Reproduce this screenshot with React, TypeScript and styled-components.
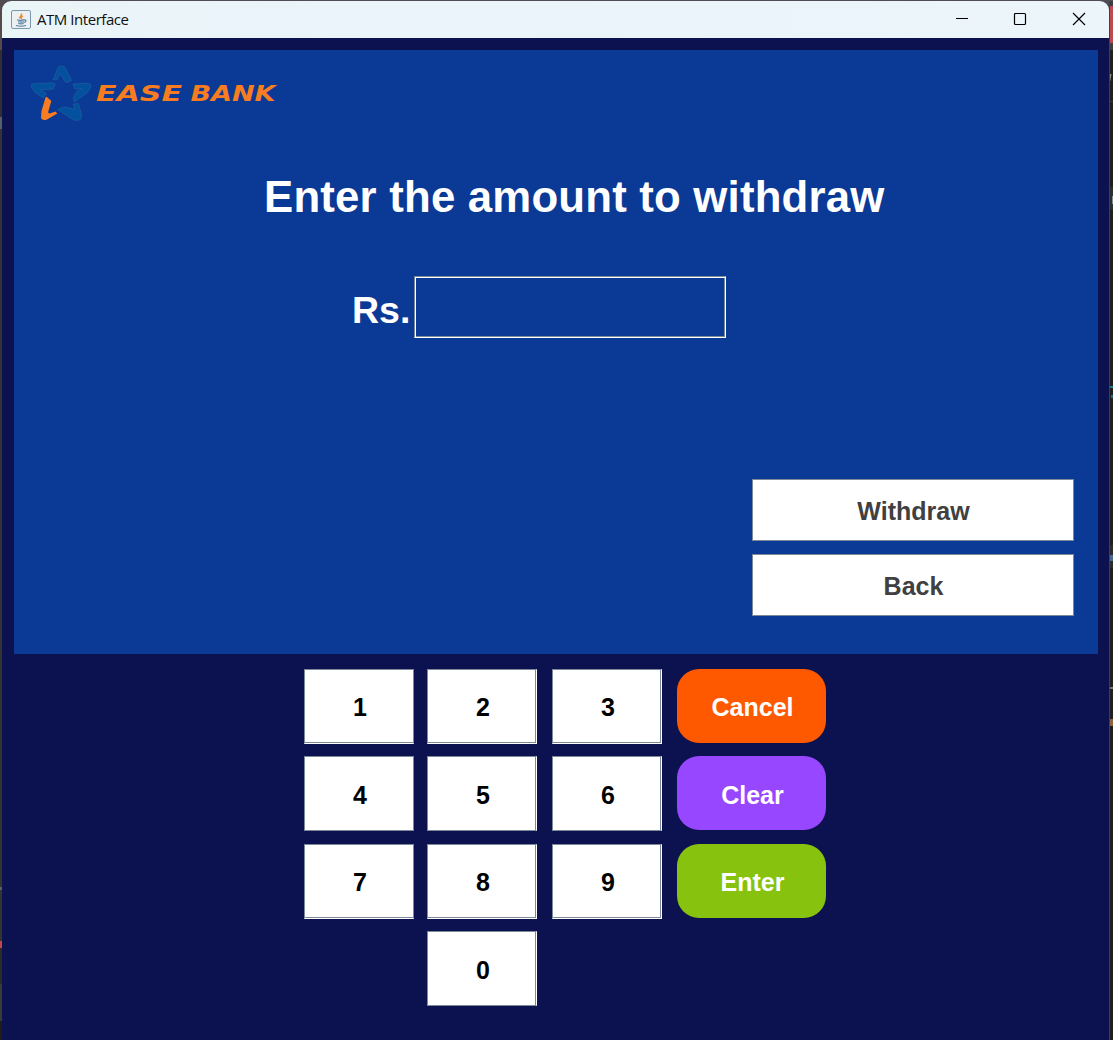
import React from "react";
import styled, { createGlobalStyle } from "styled-components";

const GlobalStyle = createGlobalStyle`
  * { box-sizing: border-box; }
  body { margin: 0; overflow: hidden; background: #1f1f1f; }
`;

const Desktop = styled.div`
  display: grid;
  grid-template-columns: 2px 1107px 4px;
  width: 1113px;
  height: 1040px;
  padding-top: 1px;
  background: linear-gradient(#524d54, #3a3a3c 38px, #1f1f1f 50px);
  font-family: "Liberation Sans", Arial, sans-serif;
`;

const LeftEdge = styled.div`
  background: linear-gradient(
    #564a4a 0 49px, #303030 49px 116px, #55606a 116px 128px, #343434 128px 886px,
    #606066 886px 889px, #343434 889px 940px, #c04848 940px 947px, #2b2b28 947px 983px, #3b3b3b 983px 1020px, #1e1e14 1020px
  );
`;

const RightEdge = styled.div`
  border-left: 1px solid #404040;
  background:
    linear-gradient(#7f8d96, #7f8d96) 2px 195px / 1px 8px no-repeat,
    linear-gradient(#247c86, #247c86) 0 385px / 3px 2px no-repeat,
    linear-gradient(#1f6f80, #1f6f80) 1px 394px / 2px 3px no-repeat,
    linear-gradient(100deg, #8c8f78 1px, transparent 2px) 0 73px / 2px 7px no-repeat,
    linear-gradient(
      #3a3e42 0 5px, #bd4a4e 5px 42px, #3e4042 42px 49px, #1f1f1f 49px 100px, #3a3a3a 100px 101px, #1f1f1f 101px 186px,
      #2b2d31 186px 209px, #1f1f1f 209px 544px, #2b2b2b 544px 554px,
      #4b6790 554px 560px, #2b2b2b 560px 567px, #1f1f1f 567px 686px, #777 686px 688px, #1f1f1f 688px 718px,
      #8a6342 718px 725px, #1f1f1f 725px
    );
`;

const Window = styled.main`
  display: flex;
  flex-direction: column;
  overflow: hidden;
  border-radius: 9px 9px 0 0;
  background: #0c114f;
`;

const TitleBar = styled.header`
  display: flex;
  align-items: center;
  flex: none;
  height: 37px;
  padding-left: 9px;
  background: linear-gradient(90deg, #eaf5f7, #ebf3fb 30%, #ebf5fa);
`;

const Title = styled.span`
  flex: 1;
  padding: 0 0 2px 6px;
  color: #111;
  font: 15px "Open Sans", "Noto Sans", sans-serif;
  letter-spacing: -0.45px;
`;

const Controls = styled.div`
  display: flex;
  padding: 0 1px 2px 0;
`;

const Control = styled.span`
  display: grid;
  place-items: center;
  width: 58.5px;
  height: 35px;
`;

const Screen = styled.section`
  display: flex;
  flex-direction: column;
  flex: none;
  width: 1084px;
  height: 604px;
  margin: 12px 0 0 12px;
  background: #0b3996;
  color: #fff;
`;

const Heading = styled.h1`
  margin: 40px 0 0 250px;
  font-size: 43.75px;
  line-height: 50px;
  letter-spacing: 0.2px;
  white-space: nowrap;
`;

const AmountRow = styled.label`
  display: flex;
  margin: 54px 0 0 338px;
  height: 62px;
`;

const Currency = styled.span`
  width: 62px;
  padding-top: 13px;
  font-size: 37.5px;
  font-weight: bold;
  line-height: 43px;
`;

const AmountInput = styled.input`
  width: 312px;
  height: 62px;
  padding: 0 8px;
  border: 1px solid;
  border-color: #7a8a99 #fff #fff #7a8a99;
  border-radius: 0;
  outline: none;
  background: transparent;
  box-shadow: inset 1px 1px #fff, inset -1px -1px #7a8a99;
  color: #fff;
  font: bold 37.5px "Liberation Sans", Arial, sans-serif;
`;

const Actions = styled.div`
  display: flex;
  flex-direction: column;
  gap: 13px;
  width: 322px;
  margin: 141px 0 0 738px;
`;

const ButtonBase = styled.button`
  display: flex;
  align-items: center;
  justify-content: center;
  border: 0;
  font: bold 25px/29px "Liberation Sans", Arial, sans-serif;
`;

const ActionButton = styled(ButtonBase)`
  height: 62px;
  padding: 3px 0 0 1px;
  border: 1px solid #7a8a99;
  background: #fff;
  color: #404040;
`;

const Keypad = styled.section`
  display: grid;
  grid-template-columns: 123px 125px 125px 149px;
  grid-template-rows: 87px 88px 87px 75px;
  margin: 15px 0 0 302px;
`;

const Key = styled(ButtonBase)<{ $col: number; $right?: boolean; $bottom?: boolean }>`
  grid-column: ${(p) => p.$col};
  width: 110px;
  height: 75px;
  padding: ${(p) => (p.$bottom ? "2px" : "4px")} 0 0 2px;
  border: 1px solid #7a8a99;
  border-right-color: ${(p) => (p.$right ? "#fff" : "#7a8a99")};
  border-bottom-color: ${(p) => (p.$bottom ? "#fff" : "#7a8a99")};
  box-shadow: inset ${(p) => (p.$right ? "-1px" : "0")} ${(p) => (p.$bottom ? "-1px" : "0")} #7a8a99;
  background: #fff;
  color: #000;
`;

const FunctionKey = styled(ButtonBase)<{ $color: string; $raised: boolean }>`
  grid-column: 4;
  width: 148.5px;
  height: 73.5px;
  padding: ${(p) => (p.$raised ? "2.5px" : "4.5px")} 0 0 2.5px;
  border-radius: 22px;
  background: ${(p) => p.$color};
  color: #fff;
`;

const BrandLogo = styled.svg`
  display: block;
  flex: none;
  margin: 12px 0 0 14px;
`;

function JavaIcon() {
  return (
    <svg width="20" height="20" viewBox="0 0 20 20" fill="none">
      <rect x=".5" y=".5" width="19" height="18" rx="1.5" fill="#edf0f3" stroke="#7b98b1" />
      <path d="M10.500 3.500c1 2-3 3-1.500 5M11.800 6c-2 1-1.800 1.800-1 3" stroke="#ef8b2c" strokeWidth="1.500" />
      <path d="M6 9.700c2 .7 5 .7 7.500 0M7 11.700c2 .6 4 .6 6 0M7.300 13.500c2 .5 4 .5 5.400 0M5 15.500c3 .9 7 .9 10 0M13.600 10c2-.3 1.700 2-.4 2.500" stroke="#527f9f" strokeWidth="1.200" />
    </svg>
  );
}

function Logo() {
  return (
    <BrandLogo width="256" height="70" viewBox="28 62 256 70">
      <g fill="#02509e" stroke="#2a6a9c" strokeWidth=".5">
        <path d="M53 79.500l1.500-3 3-8q1-2.300 3-2.300h2.500q1.500 0 2.500 2l6 12.500-5.500 2-6-9.300-3 6.600z" />
        <path d="M31.300 87q-.5-3.500 3-3.500l19-.7 2 1.200-2 5-12.500 1 5.500 3.500-3 4.500-8.500-6z" />
        <path d="M73 84l14-.8q4.500 0 3.800 4l-3 5-13.500 9.800-1-4.500 3-5.500 6-3.500-7.300.5z" />
        <path d="M57.500 109.500l6.500-2.700 11 2.700-1.700-5.500 5-.5 3.200 10.500-.5 5q-3 2.500-7.500.8z" />
      </g>
      <path d="M45.500 97.500l1-.8 4.800 4.300-3.300 11.500 1.500 1 6-2 1.800 2-10.300 6q-4.500 1.500-6-1.500l.5-7z" fill="#f97d20" />
      <g fill="#f97d20" fontFamily="DejaVu Sans, sans-serif" fontSize="22" fontWeight="bold" fontStyle="italic">
        <text x="96" y="101" textLength="86" lengthAdjust="spacingAndGlyphs">EASE</text>
        <text x="190.500" y="101" textLength="85" lengthAdjust="spacingAndGlyphs">BANK</text>
      </g>
    </BrandLogo>
  );
}

const rows = [
  { digits: ["1", "2", "3"], label: "Cancel", color: "#ff5900", bottom: true },
  { digits: ["4", "5", "6"], label: "Clear", color: "#9747ff", bottom: false },
  { digits: ["7", "8", "9"], label: "Enter", color: "#87c20e", bottom: true },
];

export default function App() {
  return (
    <>
      <GlobalStyle />
      <Desktop>
        <LeftEdge />
        <Window>
          <TitleBar>
            <JavaIcon />
            <Title>ATM Interface</Title>
            <Controls>
              <Control><svg width="14" height="14" stroke="#000" fill="none"><path d="M1 6.500h12" /></svg></Control>
              <Control><svg width="14" height="14" stroke="#000" fill="none"><rect x="1.500" y="1.500" width="11" height="11" rx="1" strokeWidth="1.200" /></svg></Control>
              <Control><svg width="14" height="14" stroke="#000" fill="none"><path d="M1 1l12 12M13 1L1 13" strokeWidth="1.200" /></svg></Control>
            </Controls>
          </TitleBar>
          <Screen>
            <Logo />
            <Heading>Enter the amount to withdraw</Heading>
            <AmountRow>
              <Currency>Rs.</Currency>
              <AmountInput />
            </AmountRow>
            <Actions>
              <ActionButton>Withdraw</ActionButton>
              <ActionButton>Back</ActionButton>
            </Actions>
          </Screen>
          <Keypad>
            {rows.map((row) => (
              <React.Fragment key={row.label}>
                {row.digits.map((digit, i) => (
                  <Key key={digit} $col={i + 1} $right={i > 0} $bottom={row.bottom}>{digit}</Key>
                ))}
                <FunctionKey $color={row.color} $raised={row.bottom}>{row.label}</FunctionKey>
              </React.Fragment>
            ))}
            <Key $col={2} $right>0</Key>
          </Keypad>
        </Window>
        <RightEdge />
      </Desktop>
    </>
  );
}
